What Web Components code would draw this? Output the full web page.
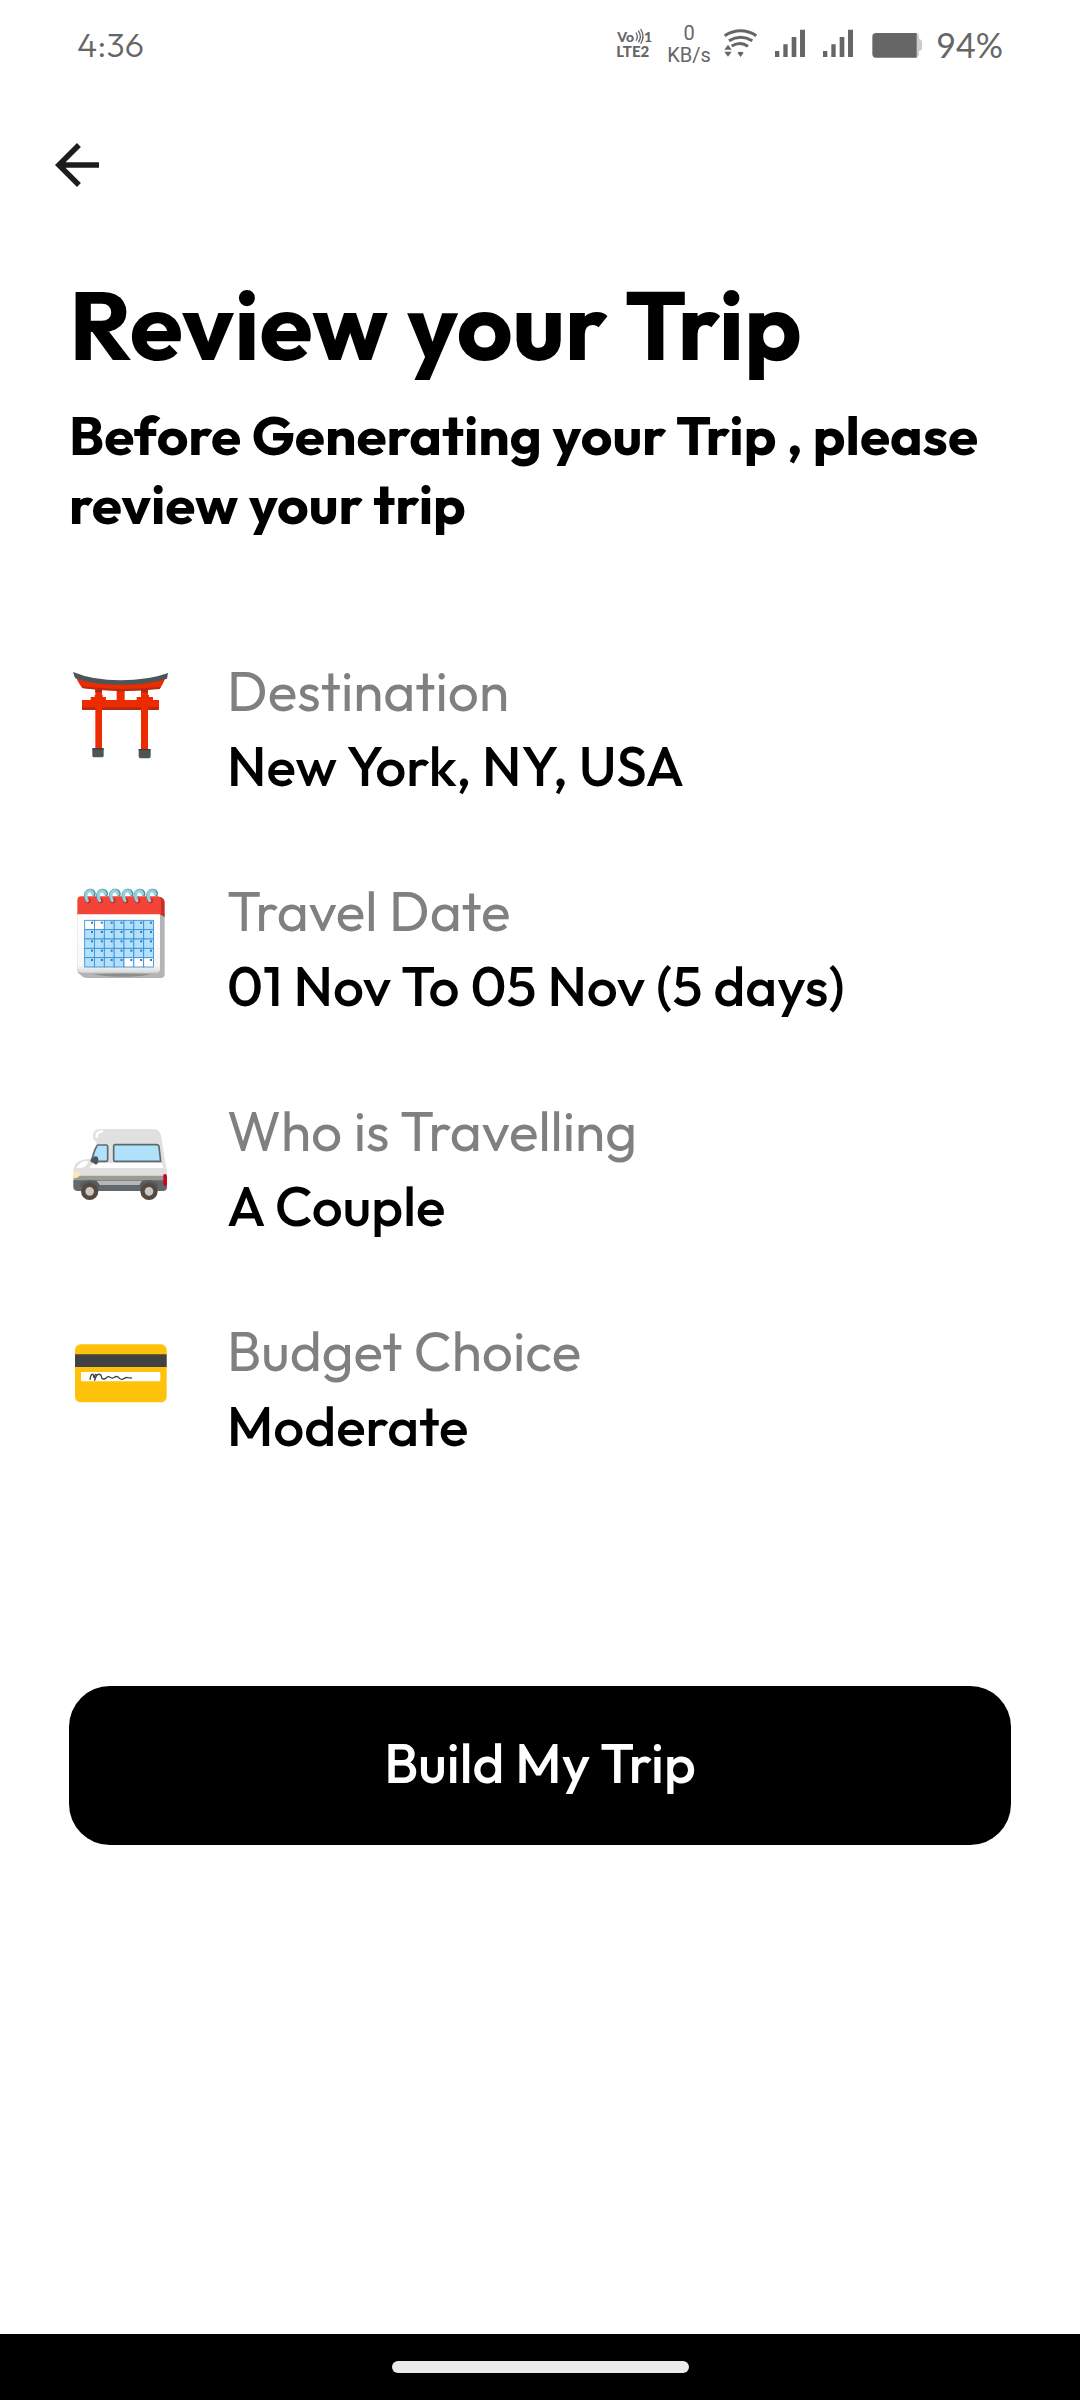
<!DOCTYPE html>
<html lang="en">
<head>
<meta charset="utf-8">
<meta name="viewport" content="width=device-width, initial-scale=1">
<title>Review your Trip</title>
<style>
  body { margin: 0; background: #fff; color: #000; font-family: Outfit, Lato, "Open Sans", sans-serif; }
</style>
</head>
<body>
<trip-screen>
  <status-bar slot="status" time="4:36" battery="94%"></status-bar>
  <screen-header slot="header"></screen-header>
  <trip-heading slot="content">
    Review your Trip
    <span slot="sub">Before Generating your Trip , please review your trip</span>
  </trip-heading>
  <trip-summary slot="content">
    <trip-detail icon="torii"><span slot="label">Destination</span>New York, NY, USA</trip-detail>
    <trip-detail icon="calendar"><span slot="label">Travel Date</span>01 Nov To 05 Nov (5 days)</trip-detail>
    <trip-detail icon="van"><span slot="label">Who is Travelling</span>A Couple</trip-detail>
    <trip-detail icon="card"><span slot="label">Budget Choice</span>Moderate</trip-detail>
  </trip-summary>
  <primary-button slot="content">Build My Trip</primary-button>
  <gesture-bar slot="nav"></gesture-bar>
</trip-screen>

<script>
const define = (name, render) => customElements.define(name, class extends HTMLElement {
  constructor() { super(); this.attachShadow({ mode: 'open' }); }
  connectedCallback() { this.shadowRoot.innerHTML = render(this); }
});

/* Six rings and the day grid of the calendar are generated from their column positions. */
const rings = [88, 125, 163, 201, 237, 275].map(x =>
  `<circle cx="${x - 4}" cy="77" r="8" fill="#b8322d"/>
   <path d="M${x - 8} 76C${x - 18} 56 ${x - 6} 44 ${x + 4} 46C${x + 15} 48 ${x + 17} 56 ${x + 13} 63" fill="none" stroke="#4f8b99" stroke-width="9"/>
   <path d="M${x - 6} 77C${x - 15} 58 ${x - 8} 46 ${x + 2} 47C${x + 8} 48 ${x + 10} 52 ${x + 11} 57" fill="none" stroke="#94d1e0" stroke-width="9" stroke-linecap="round"/>`).join('');
let days = '';
for (let r = 0; r < 5; r++) for (let c = 0; c < 7; c++) {
  const x = 74 + c * 29.5, y = 136 + r * 28;
  const blank = (r === 0 && c < 2) || (r === 4 && c > 3);
  days += `<rect x="${x}" y="${y}" width="29.5" height="28" fill="${blank ? '#fff' : '#b3e1fb'}" stroke="#3b8fd4" stroke-width="2.6"/><rect x="${x + 19}" y="${y + 4}" width="6" height="6" fill="#2a7cc0"/>`;
}

const icons = {
  torii: `<svg viewBox="39 51 288 288" aria-hidden="true">
    <path d="M170 106h24v46h-24zM106 118h20v182h-20zM243 118h21v182h-21z" fill="#ec2c00"/>
    <path d="M106 118h20v9h-20zM170 112h24v12h-24zM243 118h21v9h-21z" fill="#a82a12"/>
    <path d="M66 150h26v-9h12v-6h24v6h10v9h92v-9h13v-6h24v6h12v9h18v30H66z" fill="#ec2c00"/>
    <path d="M66 172h40v8H72q-6 0-6-8zM126 172h117v8H126zM264 172h33q0 8-5 8h-28z" fill="#b52811"/>
    <path d="M48 82Q180 116 316 84Q308 106 299 115Q180 132 67 113Q57 104 48 82z" fill="#ec2c00"/>
    <path d="M64 109Q180 124 303 110L299 117Q180 130 68 115z" fill="#b52811"/>
    <path d="M39 66Q100 91 181 91Q265 91 324 69L321 86Q264 105 181 104Q94 104 45 84z" fill="#4c5558"/>
    <path d="M97 295h34v22q0 5-5 5h-24q-5 0-5-5zM236 297h36v22q0 6-5 6h-26q-5 0-5-6z" fill="#4c5558"/>
    <path d="M97 295h34v4H97zM236 297h36v4h-36z" fill="#384044"/></svg>`,
  calendar: `<svg viewBox="39 36 288 288" aria-hidden="true">
    <defs><linearGradient id="g" x2="0" y2="1"><stop offset="0" stop-color="#fff"/><stop offset=".88" stop-color="#f7f7f7"/><stop offset="1" stop-color="#d9d9d9"/></linearGradient></defs>
    <path d="M52 110L300 80L314 118V298Q314 309 303 309H84Q74 309 68 305L56 295Q52 291 52 284z" fill="#b2b4b5"/>
    <path d="M52 112H300V282Q300 293 289 293H66Q52 293 52 281z" fill="url(#g)"/>
    <path d="M100 298Q190 293 272 298Q240 306 190 305Q140 306 100 298z" fill="#8b8d8e"/>
    <path d="M298 65Q314 69 314 82V126L298 117z" fill="#c62e29"/>
    <path d="M52 118V76Q52 64 64 64H292Q303 64 303 78V118z" fill="#f44438"/>
    ${rings}${days}</svg>`,
  van: `<svg viewBox="39 -9 288 288" aria-hidden="true">
    <path d="M119 57H281Q298 57 303 76L316 159Q322 178 321 207V228H40V188Q40 154 68 150L93 145Q97 129 108 106L110 95Q99 92 99 78Q99 59 119 57z" fill="#e0e0e0"/>
    <path d="M41 197H320V214H41z" fill="#9a9c91"/>
    <path d="M40 211H321V232Q321 243 309 243H54Q40 243 40 231z" fill="#62686c"/>
    <path d="M110 212H246L240 225H119z" fill="#b5b6b5"/>
    <path d="M112 159H304Q310 165 310 174H88Q93 161 112 159z" fill="#fff"/>
    <path d="M49 175Q54 158 77 153L86 155Q78 173 61 174z" fill="#fff"/>
    <path d="M110 81Q109 66 126 64" fill="none" stroke="#fff" stroke-width="8" stroke-linecap="round"/>
    <path d="M114 105H140Q143 105 143 110V149Q143 154 137 154H95Q100 127 110 109Q112 105 114 105z" fill="#b0e2fb" stroke="#60686d" stroke-width="5"/>
    <path d="M165 104H289Q296 104 297 110L302 154H165Q161 154 161 149V109Q161 104 165 104z" fill="#b0e2fb" stroke="#60686d" stroke-width="5"/>
    <path d="M91 153Q92 146 98 144Q102 138 108 139Q115 140 115 151Q115 162 108 164z" fill="#4e565a"/>
    <path d="M41 184Q56 180 63 190Q59 205 40 205z" fill="#ffe5bd"/>
    <path d="M310 195Q310 192 316 192Q321 193 321 200V222Q320 228 315 228Q310 228 310 221z" fill="#c9061d"/>
    <path d="M59 230Q62 211 88 211Q116 211 119 230zM237 230Q240 211 266 211Q293 211 296 230z" fill="#565d60"/>
    <circle cx="89" cy="244" r="19.5" fill="#c8c8c8" stroke="#54483f" stroke-width="13"/>
    <circle cx="267" cy="244" r="19.5" fill="#c8c8c8" stroke="#54483f" stroke-width="13"/></svg>`,
  card: `<svg viewBox="39 21 288 288" aria-hidden="true">
    <rect x="45" y="73" width="275" height="174" rx="17" fill="#ffc20a"/>
    <path d="M45 103H320V141H45z" fill="#424242"/>
    <rect x="63" y="156" width="238" height="28" rx="3" fill="#fff"/>
    <path d="M90 178C93 163 96 161 99 163L102 173C104 163 107 162 110 165L104 181C105 167 115 160 121 164C127 168 122 177 130 177C138 178 140 170 145 170C151 170 153 176 159 174C165 171 167 168 172 170C177 172 178 178 185 178C192 178 196 170 203 173L214 174" fill="none" stroke="#424242" stroke-width="4" stroke-linecap="round" stroke-linejoin="round"/></svg>`
};

const bars = x => `<svg width="36" height="70" viewBox="${x} 0 108 210" aria-hidden="true"><path fill="#666" d="M${x} 123h13v18h-13zM${x + 25} 103h13v38h-13zM${x + 50} 81h14v60h-14zM${x + 75} 59h15v82h-15z"/></svg>`;

define('status-bar', el => `<style>
  :host { display: flex; justify-content: space-between; height: 70px; padding: 10px 77px; color: #666; }
  .time, .level { font-size: 34px; font-weight: 300; line-height: 70px; }
  .icons { display: flex; gap: 12px; }
  .level { min-width: 70px; font-family: Lato, sans-serif; font-weight: 400; text-align: right; }
  .rate { width: 44px; padding-top: 12px; font: 20px/22px Roboto, sans-serif; text-align: center; }
  .rate span { display: block; }
  svg { display: block; overflow: visible; }
  </style>
  <div class="time">${el.getAttribute('time')}</div>
  <div class="icons">
    <svg width="40" height="70" viewBox="45 0 120 210" fill="#666" font-family="Lato, sans-serif" font-weight="900">
      <text x="52" y="95" font-size="42">Vo</text>
      <text x="132" y="95" font-size="42">1</text>
      <text x="49" y="141" font-size="45">LTE2</text>
      <path d="M108 68Q116 80 108 92M115 62Q127 80 115 97M122 57Q136 80 122 101" fill="none" stroke="#666" stroke-width="4"/>
    </svg>
    <div class="rate"><span>0</span><span>KB/s</span></div>
    <svg width="40" height="70" viewBox="369 0 120 210" fill="none" stroke="#666" aria-hidden="true">
      <path d="M374 77Q422 48 469 77M387 92Q422 71 457 92M395 108Q422 92 444 109" stroke-width="9"/>
      <path d="M373 119L384 104L395 119zM373 125H395L384 140zM412 128Q422 122 431 128L422 141z" fill="#666" stroke="none"/>
    </svg>
    ${bars(525)}${bars(670)}
    <svg width="50" height="70" viewBox="813 0 150 210" aria-hidden="true">
      <path d="M945 69Q957 69 957 80V87Q966 89 966 97V114Q966 122 957 124V133Q957 143 945 143z" fill="#ccc"/>
      <path d="M828 69H950V143H828Q817 143 817 132V80Q817 69 828 69z" fill="#666"/>
    </svg>
    <div class="level">${el.getAttribute('battery')}</div>
  </div>`);

define('screen-header', () => `<style>
  :host { display: block; padding: 42px 44px 0; }
  button { display: block; padding: 0; border: 0; background: none; color: #1d1d1f; }
  svg { display: block; width: 66px; height: 66px; }
  </style>
  <button type="button" aria-label="Back"><svg viewBox="0 0 24 24" fill="currentColor" aria-hidden="true"><path d="M20 11H7.83l5.59-5.59L12 4l-8 8 8 8 1.41-1.41L7.83 13H20v-2z"/></svg></button>`);

define('trip-heading', () => `<style>
  :host { display: block; }
  h1 { margin: 0; font-size: 97px; font-weight: 700; line-height: 120px; }
  p { margin: 16px 0 0; font-size: 55px; font-weight: 700; line-height: 69px; }
  </style>
  <h1><slot></slot></h1><p><slot name="sub"></slot></p>`);

define('trip-summary', () => `<style>
  :host { display: flex; flex-direction: column; gap: 70px; margin-top: 115px; }
  </style><slot></slot>`);

define('trip-detail', el => `<style>
  :host { display: flex; gap: 54px; font-size: 55px; line-height: 75px; }
  .icon { display: flex; justify-content: center; width: 104px; padding-top: 14px; }
  svg { width: 96px; height: 96px; }
  .text { flex: 1; }
  .label { color: #808080; }
  .value { font-weight: 500; }
  </style>
  <div class="icon">${icons[el.getAttribute('icon')]}</div>
  <div class="text"><div class="label"><slot name="label"></slot></div><div class="value"><slot></slot></div></div>`);

define('primary-button', () => `<style>
  :host { display: block; margin-top: 223px; }
  button { display: block; width: 100%; padding: 39px 42px 45px; border: 0; border-radius: 41px; background: #000; color: #fff; font: 500 55px/75px Outfit, Lato, sans-serif; }
  </style><button type="button"><slot></slot></button>`);

define('gesture-bar', () => `<style>
  :host { display: flex; justify-content: center; padding: 27px 0; background: #000; }
  div { width: 297px; height: 12px; border-radius: 6px; background: #ebebeb; }
  </style><div></div>`);

define('trip-screen', () => `<style>
  :host { display: flex; flex-direction: column; min-height: 100vh; }
  main { flex: 1; padding: 66px 69px; }
  </style>
  <slot name="status"></slot><slot name="header"></slot>
  <main><slot name="content"></slot></main>
  <slot name="nav"></slot>`);
</script>
</body>
</html>
